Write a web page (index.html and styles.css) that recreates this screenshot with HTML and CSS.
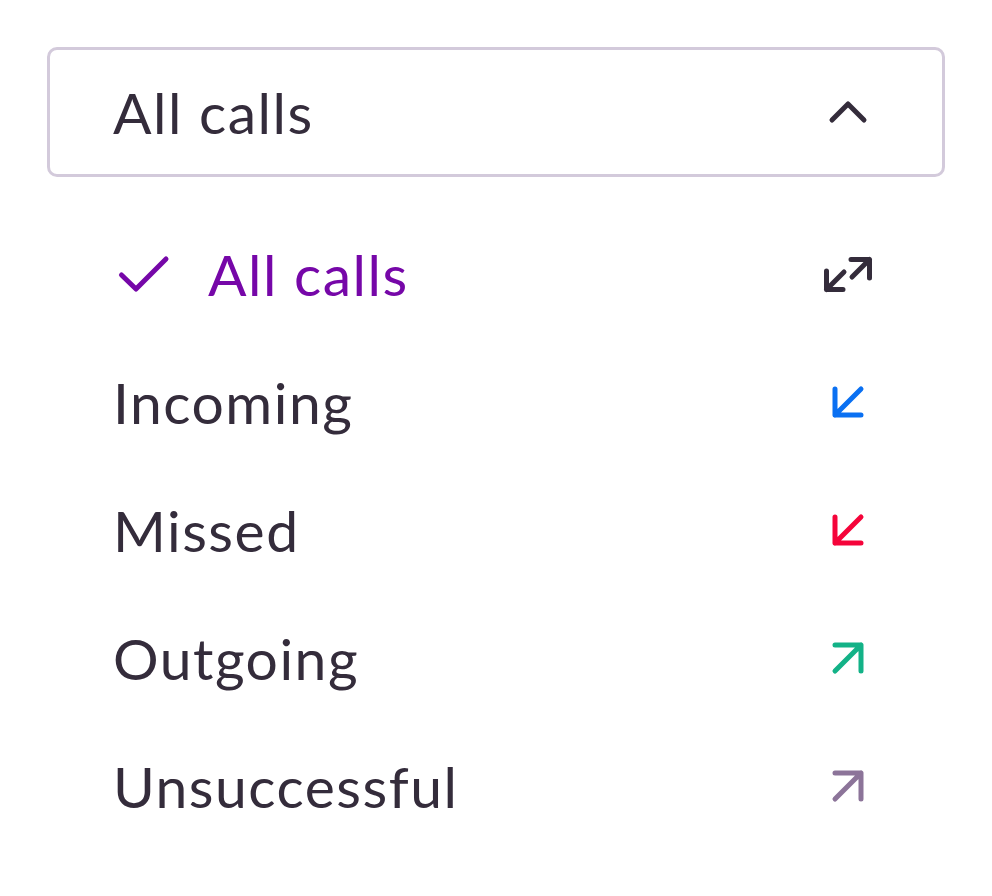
FILE: index.html
```html
<!DOCTYPE html>
<html lang="en">
<head>
<meta charset="utf-8">
<title>Call filter</title>
<link rel="stylesheet" href="styles.css">
</head>
<body>
<div class="dropdown">
  <button class="select" type="button">
    <span class="select-label">All calls</span>
    <svg class="icon" viewBox="0 0 24 24" width="48" height="48" fill="none" stroke="currentColor" stroke-width="2.5" stroke-linecap="round" stroke-linejoin="round"><path d="M4 16 L12 8 L20 16"/></svg>
  </button>
  <ul class="menu">
    <li class="item selected">
      <svg class="check" viewBox="0 0 24 24" width="48" height="48" fill="none" stroke="currentColor" stroke-width="2.5" stroke-linecap="round" stroke-linejoin="round"><path d="M1.25 12.5 L8.5 19.5 L23.5 4.5"/></svg>
      <span class="label">All calls</span>
      <svg class="icon icon-all" viewBox="0 0 24 24" width="48" height="48" fill="none" stroke="currentColor" stroke-width="2.5" stroke-linecap="round" stroke-linejoin="round"><path d="M1.25 10.5 V19.75 H9.5 M1.25 19.75 L10 11 M13.5 4.75 H22.75 V14 M22.75 4.75 L14 13.5"/></svg>
    </li>
    <li class="item">
      <span class="label">Incoming</span>
      <svg class="icon icon-in" viewBox="0 0 24 24" width="48" height="48" fill="none" stroke="currentColor" stroke-width="2.5" stroke-linecap="round" stroke-linejoin="round"><path d="M5.5 5.5 V18.5 H18.5 M5.5 18.5 L18.5 5.5"/></svg>
    </li>
    <li class="item">
      <span class="label">Missed</span>
      <svg class="icon icon-missed" viewBox="0 0 24 24" width="48" height="48" fill="none" stroke="currentColor" stroke-width="2.5" stroke-linecap="round" stroke-linejoin="round"><path d="M5.5 5.5 V18.5 H18.5 M5.5 18.5 L18.5 5.5"/></svg>
    </li>
    <li class="item">
      <span class="label">Outgoing</span>
      <svg class="icon icon-out" viewBox="0 0 24 24" width="48" height="48" fill="none" stroke="currentColor" stroke-width="2.5" stroke-linecap="round" stroke-linejoin="round"><path d="M5.5 5.5 H18.5 V18.5 M18.5 5.5 L5.5 18.5"/></svg>
    </li>
    <li class="item">
      <span class="label">Unsuccessful</span>
      <svg class="icon icon-fail" viewBox="0 0 24 24" width="48" height="48" fill="none" stroke="currentColor" stroke-width="2.5" stroke-linecap="round" stroke-linejoin="round"><path d="M5.5 5.5 H18.5 V18.5 M18.5 5.5 L5.5 18.5"/></svg>
    </li>
  </ul>
</div>
</body>
</html>
```
FILE: styles.css
```css
* { box-sizing: border-box; }
html, body { margin: 0; padding: 0; background: #ffffff; }
body {
  font-family: Lato, "Noto Sans", sans-serif;
  color: #342c3b;
}
.dropdown {
  padding: 47px 47px 0 47px;
}
.select {
  display: flex;
  align-items: center;
  justify-content: space-between;
  width: 100%;
  height: 130px;
  padding: 0 70px 0 63px;
  border: 3px solid #d3cadb;
  border-radius: 10px;
  background: #fff;
  font: inherit;
  color: inherit;
  font-size: 57px;
  line-height: 1.2;
  letter-spacing: 1.5px;
  text-align: left;
}
.icon { display: block; flex: none; overflow: visible; }
.menu {
  list-style: none;
  margin: 33px 0 0 0;
  padding: 0;
}
.item {
  display: flex;
  align-items: center;
  height: 128px;
  margin: 0 -47px;
  padding: 0 120px 0 113px;
  font-size: 57px;
  line-height: 1.2;
  letter-spacing: 1.5px;
}
.item .label { flex: 1; }
.check {
  display: block;
  flex: none;
  overflow: visible;
  margin: 0 41px 0 6px;
  color: #7607a8;
}
.item.selected .label { color: #7607a8; }
.icon-all { color: #342c3b; }
.icon-in { color: #0a70f2; }
.icon-missed { color: #f5043a; }
.icon-out { color: #13b287; }
.icon-fail { color: #8c7499; }
```
